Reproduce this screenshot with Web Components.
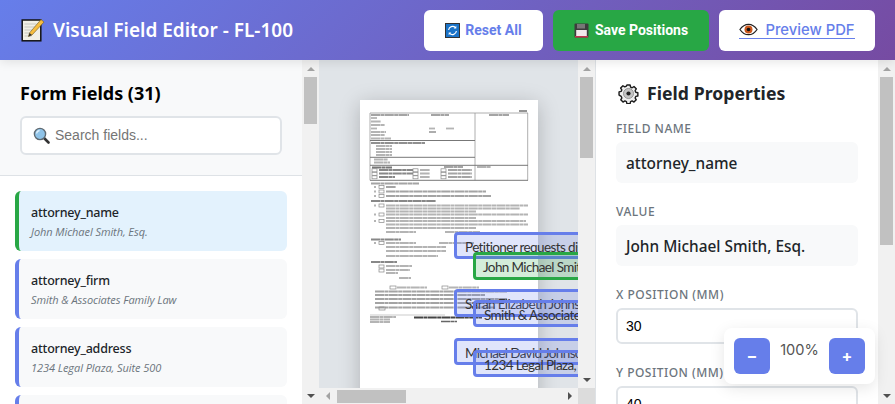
<!DOCTYPE html>
<html><head><meta charset="utf-8">
<style>
html,body{margin:0;padding:0;height:404px;overflow:hidden;background:#fff;font-family:"Noto Sans",sans-serif}
</style></head><body>
<editor-app></editor-app>
<script>
function def(name,css,html){
  customElements.define(name,class extends HTMLElement{
    constructor(){super();const s=this.attachShadow({mode:'open'});s.innerHTML='<style>'+css+'</style>'+(typeof html==='function'?html(this):html);}
  });
}
const icons={
memo:`<svg width="24" height="24" viewBox="0 0 24 24"><rect x="1.2" y="2" width="18.6" height="20.8" fill="#f1efe6" stroke="#111" stroke-width="1.5"/><path d="M3.5 6h12M3.5 9h12M3.5 12h10M3.5 15h7M3.5 18h7" stroke="#c8c8c0" stroke-width="1.2"/><path d="M7.5 18.5l1-3.6L20 1.5l3 2.6L11 17z" fill="#f7bd3f" stroke="#6b5520" stroke-width=".6"/><path d="M7.5 18.5l1-3.6 2.5 2.1z" fill="#333"/></svg>`,
search:`<svg width="17" height="17" viewBox="0 0 17 17"><path d="M10.5 10.5l5 5" stroke="#333" stroke-width="2.6" stroke-linecap="round"/><circle cx="7" cy="7" r="5.6" fill="#8fc3e8" stroke="#5f6a72" stroke-width="1.4"/><path d="M3.6 6.5a3.5 3.5 0 013-3" fill="none" stroke="#dff0fb" stroke-width="1.3"/></svg>`,
reset:`<svg width="15" height="15" viewBox="0 0 15 15"><rect x=".5" y=".5" width="14" height="14" fill="#1a73c8" stroke="#333" stroke-width="1"/><path d="M3.6 7a4 4 0 016.8-2.4M11.4 8a4 4 0 01-6.8 2.4" fill="none" stroke="#fff" stroke-width="1.2"/><path d="M11.3 2.8v2.6H8.7zM3.7 12.2V9.6h2.6z" fill="#fff"/></svg>`,
save:`<svg width="15" height="15" viewBox="0 0 15 15"><rect x=".5" y=".5" width="14" height="14" rx="1" fill="#3c3c3c"/><rect x="3" y="1" width="8" height="4.5" fill="#777"/><rect x="2.2" y="7" width="10.6" height="6.4" fill="#f2e9ec"/><rect x="1" y="13" width="13" height="1.5" fill="#c2344e"/></svg>`,
eye:`<svg width="19" height="13" viewBox="0 0 20 13"><path d="M1 6.5C4 2 7 1 10 1s6 1 9 5.5C16 11 13 12 10 12S4 11 1 6.5z" fill="#fff" stroke="#222" stroke-width="1.3"/><circle cx="10" cy="6.5" r="4.2" fill="#c9571d"/><circle cx="10" cy="6.5" r="1.9" fill="#111"/></svg>`,
gear:`<svg width="21" height="21" viewBox="0 0 20 20"><path d="M8.3 1h3.4l.5 2.2 1.6.7 2-1.2 2.4 2.4-1.2 2 .7 1.6 2.2.5v3.4l-2.2.5-.7 1.6 1.2 2-2.4 2.4-2-1.2-1.6.7-.5 2.2H8.3l-.5-2.2-1.6-.7-2 1.2-2.4-2.4 1.2-2-.7-1.6L0 11.7V8.3l2.2-.5.7-1.6-1.2-2 2.4-2.4 2 1.2 1.6-.7z" transform="translate(1 1) scale(.9)" fill="#eee" stroke="#1b1b1b" stroke-width="1.5" stroke-linejoin="round"/><circle cx="10" cy="10" r="4.8" fill="#c4c4c4" stroke="#8a8a8a" stroke-width=".8"/><circle cx="10" cy="10" r="2" fill="#222"/></svg>`
};

def('app-btn',`
:host{display:block}
.b{display:flex;align-items:center;justify-content:center;height:41px;box-sizing:border-box;border-radius:6px;background:var(--bg,#fff);color:var(--fg,#667eea);font:700 14px/1 Roboto,sans-serif;gap:var(--gap,5px);width:var(--w)}
`,`<div class="b"><slot name="i"></slot><span><slot></slot></span></div>`);

def('app-header',`
:host{display:flex;align-items:center;justify-content:space-between;height:60px;box-sizing:border-box;padding:0 20px 0 21px;background:linear-gradient(135deg,#667eea 0%,#764ba2 100%);box-shadow:0 2px 10px rgba(0,0,0,.1);position:relative;z-index:3;flex:none}
.l{display:flex;align-items:center;gap:8px;color:#fff;font:600 19px/1 "Noto Sans",sans-serif}
.a{display:flex;gap:10px}
.i{display:flex}
.lk{font:500 14.8px/1 Inter,"Noto Sans",sans-serif;display:flex;align-items:center;color:#667eea;border-bottom:1px solid #667eea;padding-bottom:1px;gap:7px;margin-top:2px}
`,`<div class="l"><span class="i">${icons.memo}</span><span>Visual Field Editor - FL-100</span></div>
<div class="a">
<app-btn style="--w:119px"><span slot="i" class="i">${icons.reset}</span>Reset All</app-btn>
<app-btn style="--w:156px;--bg:#28a745;--fg:#fff;--gap:6px"><span slot="i" class="i">${icons.save}</span>Save Positions</app-btn>
<app-btn style="--w:156px"><span class="lk"><span class="i">${icons.eye}</span>Preview PDF</span></app-btn>
</div>`);

def('fake-vbar',`
:host{display:flex;flex-direction:column;align-items:center;width:17px;background:#f1f1f1;flex:none;height:100%;box-sizing:border-box}
.up,.dn{width:0;height:0;border-left:4px solid transparent;border-right:4px solid transparent;flex:none}
.up{border-bottom:4px solid #a3a3a3;margin-top:7px;margin-bottom:6px}
.dn{border-top:4px solid #505050;margin-top:auto;margin-bottom:var(--dn,6px)}
.t{width:13px;height:var(--h,47px);background:#c1c1c1;flex:none}
`,`<div class="up"></div><div class="t"></div><div class="dn"></div>`);

def('field-card',`
:host{display:block;height:60px;box-sizing:border-box;background:var(--bg,#f8f9fa);border-left:4px solid var(--bc,#667eea);border-radius:6px;padding:13px 12px 0;margin-bottom:8px;flex:none}
.n{font:500 12.5px/18px "Noto Sans",sans-serif;letter-spacing:-.2px;color:#212529}
.v{font:italic 400 11px/15px "Open Sans",sans-serif;letter-spacing:-.07px;color:#6c757d;margin-top:2px}
`,`<div class="n"><slot name="n"></slot></div><div class="v"><slot name="v"></slot></div>`);

def('left-panel',`
:host{display:flex;width:319px;flex:none;height:344px;background:#fff}
.m{flex:1;min-width:0;display:flex;flex-direction:column;overflow:hidden}
.h{background:#f8f9fa;border-bottom:1px solid #dee2e6;padding:20px;height:116px;box-sizing:border-box;flex:none}
h2{margin:0 0 9px;font:700 18px/27px "Noto Sans",sans-serif;color:#000}
.s{display:flex;align-items:center;gap:5px;height:39px;box-sizing:border-box;border:2px solid #e0e4e8;border-radius:6px;background:#fff;padding:0 11px;font:14px "Liberation Sans",sans-serif;color:#757575}
.s span:last-child{margin-top:-1px}
.i{display:flex}
.lst{padding:15px 15px 0;display:flex;flex-direction:column}
`,`<div class="m"><div class="h"><h2>Form Fields (31)</h2><div class="s"><span class="i">${icons.search}</span><span>Search fields...</span></div></div>
<div class="lst">
<field-card style="--bg:#e3f2fd;--bc:#28a745"><span slot="n">attorney_name</span><span slot="v">John Michael Smith, Esq.</span></field-card>
<field-card><span slot="n">attorney_firm</span><span slot="v">Smith &amp; Associates Family Law</span></field-card>
<field-card><span slot="n">attorney_address</span><span slot="v">1234 Legal Plaza, Suite 500</span></field-card>
<field-card></field-card>
</div></div><fake-vbar></fake-vbar>`);

def('field-box',`
:host{position:absolute;left:var(--x);top:var(--y);width:300px;height:var(--h,28px);box-sizing:border-box;border:3px solid #667eea;border-radius:4px;background:rgba(102,126,234,.2);padding:0 8px;font:13.5px/25px Lato,"Noto Sans",sans-serif;letter-spacing:-.62px;color:#333;white-space:nowrap;overflow:hidden}
:host([sel]){border-color:#28a745;background:rgba(40,167,69,.2);padding:0 7px}
`,`<slot></slot>`);

function docSvg(){
 const line=(x1,y,x2,c='#999',w=.8)=>`<path d="M${x1} ${y}H${x2}" stroke="${c}" stroke-width="${w}"/>`;
 const v=(x,y1,y2,c='#999',w=.8)=>`<path d="M${x} ${y1}V${y2}" stroke="${c}" stroke-width="${w}"/>`;
 const t=(x,y,w,c='#b4b4b4',h=1.8)=>`<path d="M${x} ${y}h${w}" stroke="${c}" stroke-width="${h}" stroke-dasharray="9 .4 4 .4"/>`;
 const box=(x,y,w=5,h=3.5)=>`<rect x="${x}" y="${y}" width="${w}" height="${h}" fill="none" stroke="#888" stroke-width=".7"/>`;
 let s='';
 s+=t(159,11,8,'#888');
 s+=line(10,13,168);s+=v(10,13,80.3);s+=v(115,13,80.3);s+=v(167.7,13,80.3);
 s+=line(10,40.5,115,'#777',1);s+=line(10,57.3,115,'#777',1);s+=line(10,65.3,168,'#777',1);s+=line(10,80.3,168,'#777',1);
 s+=t(11,15,38,'#a4a4a4');s+=t(71,15,18,'#a4a4a4');s+=t(129,15,20,'#a4a4a4');
 [18,21.5,25,28.5,32,35,38.5].forEach((y,i)=>s+=t(11,y,[6,10,14,6,15,14,20][i]));
 s+=t(69,28.5,6);s+=t(86,28.5,8);s+=t(69,32,7,'#a4a4a4');
 s+=t(11,43,54,'#909090');[46,49,52,55].forEach((y,i)=>s+=t(16,y,16));
 s+=t(14,59.5,14);s+=t(14,62.5,16);
 s+=t(12,67.5,20,'#777',1.8);s+=t(84,67,19,'#a4a4a4');s+=t(117,67,14);
 [70,73.5,77].forEach((y,i)=>{s+=box(12,y-1.2,5,3);s+=t(19,y,i<2?34:16,'#888',1.8);s+=box(53,y-1.2,5,3);s+=t(60,y,10,'#b4b4b4');s+=box(81,y-1.2,5,3);s+=t(88,y,24,'#a4a4a4');});
 s+=t(11,83.5,48,'#a4a4a4');
 [87,91.5,96].forEach((y,i)=>{s+=t(14,y,2);s+=box(19,y-1.5,5,3);s+=t(26,y,[10,100,105][i],'#a4a4a4');});
 s+=t(11,101,65,'#888');
 [105.5,114.5,121].forEach((y,i)=>{s+=t(14,y,2);s+=box(19,y-1.5,5,3);s+=t(26,y,[142,142,140][i]);});
 s+=t(26,108.5,134);s+=t(26,111.5,90);s+=t(26,118,90);s+=t(26,124.5,142);s+=t(26,128,90);s+=t(26,132,30);s+=t(85,132,35,'#b4b4b4');
 s+=t(11,139.5,30,'#888');
 s+=t(14,143,2);s+=box(19,141.5,5,3);s+=t(26,143,30,'#b4b4b4');s+=t(79,143,35,'#b4b4b4');
 s+=t(26,147,60);s+=t(26,151,60);s+=t(26,156,52);
 s+=t(11,162,26,'#888');
 s+=box(19,165,5,3);s+=box(19,169,5,3);s+=t(26,166,26,'#b4b4b4');s+=t(26,170,24,'#b4b4b4');s+=t(26,173,12);
 s+=t(39,178,12);
 s+=box(30,186,6,3);s+=t(37,187.5,30,'#b4b4b4');s+=box(82,186,6,3);s+=t(89,187.5,30);
 [191.5,195,199,203,207.5].forEach((y,i)=>s+=t(15,y,[132,110,132,125,120][i],'#a4a4a4'));
 s+=box(19,207,6,3);
 s+=line(10,215,85,'#ccc',1.2);
 s+=t(10,217,26);s+=t(10,219.5,20);s+=t(10,222,20);
 s+=t(54,217.5,68,'#444',1.8);s+=t(81,221.5,16,'#666',1.7);
 return `<svg width="178" height="288" viewBox="0 0 178 288" style="display:block;filter:blur(.55px)">${s}</svg>`;
}

def('doc-view',`
:host{display:flex;flex:none;width:276px;height:344px;background:#f1f1f1}
.m{flex:1;min-width:0;display:flex;flex-direction:column}
.v{flex:1;min-height:0;background:#e0e4e8;position:relative;overflow:hidden;padding:40px 0 0 41px;box-sizing:border-box}
.pg{width:178px;height:400px;background:#fff;box-shadow:0 4px 20px rgba(0,0,0,.22)}
.hb{height:16px;flex:none;display:flex;align-items:center;background:#f1f1f1}
.l,.r{width:0;height:0;border-top:4px solid transparent;border-bottom:4px solid transparent;flex:none}
.l{border-right:4px solid #a3a3a3;margin-left:7px}
.r{border-left:4px solid #505050;margin-left:auto;margin-right:6px}
.th{height:13px;width:69px;background:#c1c1c1;margin-left:7px}
.s{display:flex;flex-direction:column;width:17px;flex:none;height:100%}
.s fake-vbar{flex:1;min-height:0;height:auto}
.c{height:16px;background:#dcdcdc;flex:none}
`,`<div class="m"><div class="v"><div class="pg">${docSvg()}</div>
<field-box style="--x:135px;--y:172px;--h:27px">Petitioner requests dissolution</field-box>
<field-box style="--x:154px;--y:192px" sel>John Michael Smith, Esq.</field-box>
<field-box style="--x:135px;--y:229px">Sarah Elizabeth Johnson</field-box>
<field-box style="--x:154px;--y:240px;--h:27px">Smith &amp; Associates Family Law</field-box>
<field-box style="--x:135px;--y:278px;--h:27px">Michael David Johnson</field-box>
<field-box style="--x:154px;--y:290px;--h:27px">1234 Legal Plaza, Suite 500</field-box>
</div><div class="hb"><span class="l"></span><span class="th"></span><span class="r"></span></div></div>
<div class="s"><fake-vbar style="--h:81px"></fake-vbar><div class="c"></div></div>`);

def('prop-row',`
:host{display:block;margin-bottom:20px}
label{display:block;font:500 12px/16px "Noto Sans",sans-serif;letter-spacing:.5px;text-transform:uppercase;color:#6c757d;margin-bottom:5px;padding-top:1px}
.ro{height:41px;box-sizing:border-box;background:#f8f9fa;border-radius:6px;padding:1px 10px 0;display:flex;align-items:center;font:500 15.4px "Noto Sans",sans-serif;color:#212529}
.in{height:36px;box-sizing:border-box;background:#fff;border:2px solid #e0e4e8;border-radius:6px;padding:0 8px;display:flex;align-items:center;font:14px "Liberation Sans",sans-serif;color:#000}
`,h=>{const ro=h.hasAttribute('ro');return `<label>${h.getAttribute('label')}</label><div class="${ro?'ro':'in'}"><slot></slot></div>`});

def('right-panel',`
:host{display:flex;width:300px;flex:none;height:344px;background:#fff;overflow:hidden}
.m{flex:1;min-width:0;box-sizing:border-box;padding:20px 20px 0;border-left:1px solid #dee2e6;overflow:hidden}
h2{margin:0 0 13px;display:flex;align-items:center;gap:8px;font:700 17.6px/27px "Noto Sans",sans-serif;letter-spacing:.05px;color:#212529;padding-left:2px}
.i{display:flex}
`,`<div class="m"><h2><span class="i">${icons.gear}</span>Field Properties</h2>
<prop-row ro label="Field Name">attorney_name</prop-row>
<prop-row ro label="Value">John Michael Smith, Esq.</prop-row>
<prop-row label="X Position (mm)">30</prop-row>
<prop-row label="Y Position (mm)">40</prop-row>
</div><fake-vbar style="--h:168px"></fake-vbar>`);

def('zoom-ctl',`
:host{position:absolute;left:724px;top:328px;width:151px;height:56px;box-sizing:border-box;background:#fff;border-radius:8px;box-shadow:0 4px 15px rgba(0,0,0,.1);padding:10px;display:flex;gap:10px;z-index:5}
.b{width:36px;height:36px;border-radius:6px;background:#667eea;color:#fff;display:flex;align-items:center;justify-content:center;font:700 16px/1 Inter,sans-serif}
.p{flex:1;text-align:center;font:14.6px/20px Inter,sans-serif;color:#555;padding-top:2px;white-space:nowrap}
`,`<div class="b">−</div><div class="p">100%</div><div class="b">+</div>`);

def('editor-app',`
:host{display:block;width:895px;height:404px;position:relative;overflow:hidden}
.r{display:flex;height:344px}
`,`<app-header></app-header><div class="r"><left-panel></left-panel><doc-view></doc-view><right-panel></right-panel></div><zoom-ctl></zoom-ctl>`);
</script>
</body></html>
